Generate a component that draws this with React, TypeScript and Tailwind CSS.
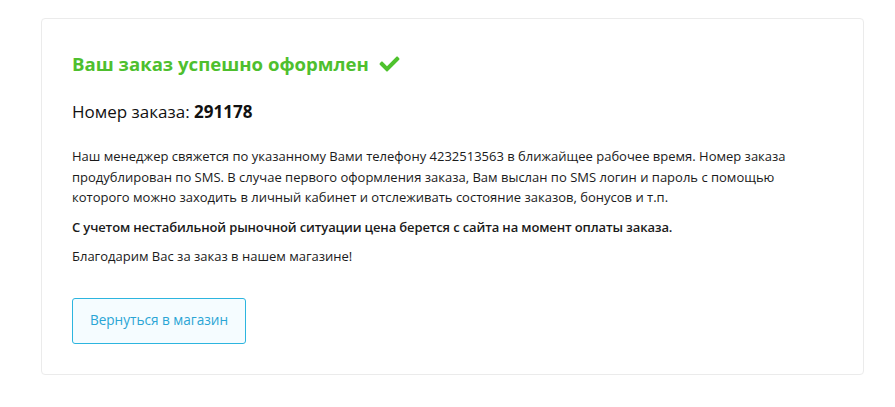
import { FaCheck } from "react-icons/fa";

export default function App() {
  return (
    <div
      className="w-[895px] h-[407px] bg-white pt-[18px] pl-[41px]"
      style={{ fontFamily: "'Open Sans', 'Noto Sans', sans-serif" }}
    >
      <div className="w-[823px] h-[357px] rounded-[4px] border border-[#ebebeb] bg-white pt-[31px] px-[30px]">
        <h1 className="flex items-center gap-[9px] text-[18.6px] leading-[28px] font-bold text-[#4ebf2e]">
          Ваш заказ успешно оформлен
          <FaCheck className="text-[#4ec22d] w-[23px] h-[20px]" />
        </h1>
        <div className="mt-[22px] text-[17px] leading-[24px] text-[#111]">
          Номер заказа: <span className="font-bold">291178</span>
        </div>
        <div className="mt-[22px] text-[13px] leading-[20.5px] text-[#1a1a1a]">
          <p>
            Наш менеджер свяжется по указанному Вами телефону 4232513563 в ближайщее рабочее время. Номер заказа
            продублирован по SMS. В случае первого оформления заказа, Вам выслан по SMS логин и пароль с помощью
            которого можно заходить в личный кабинет и отслеживать состояние заказов, бонусов и т.п.
          </p>
          <p className="mt-[9px] font-semibold tracking-[-0.13px]">
            С учетом нестабильной рыночной ситуации цена берется с сайта на момент оплаты заказа.
          </p>
          <p className="mt-[9px]">Благодарим Вас за заказ в нашем магазине!</p>
        </div>
        <button
          type="button"
          className="mt-[31px] w-[174px] h-[46px] rounded-[3px] border border-[#2cb5df] bg-[#f5fcff] text-[13.6px] text-[#2aa5d5]"
        >
          Вернуться в магазин
        </button>
      </div>
    </div>
  );
}
